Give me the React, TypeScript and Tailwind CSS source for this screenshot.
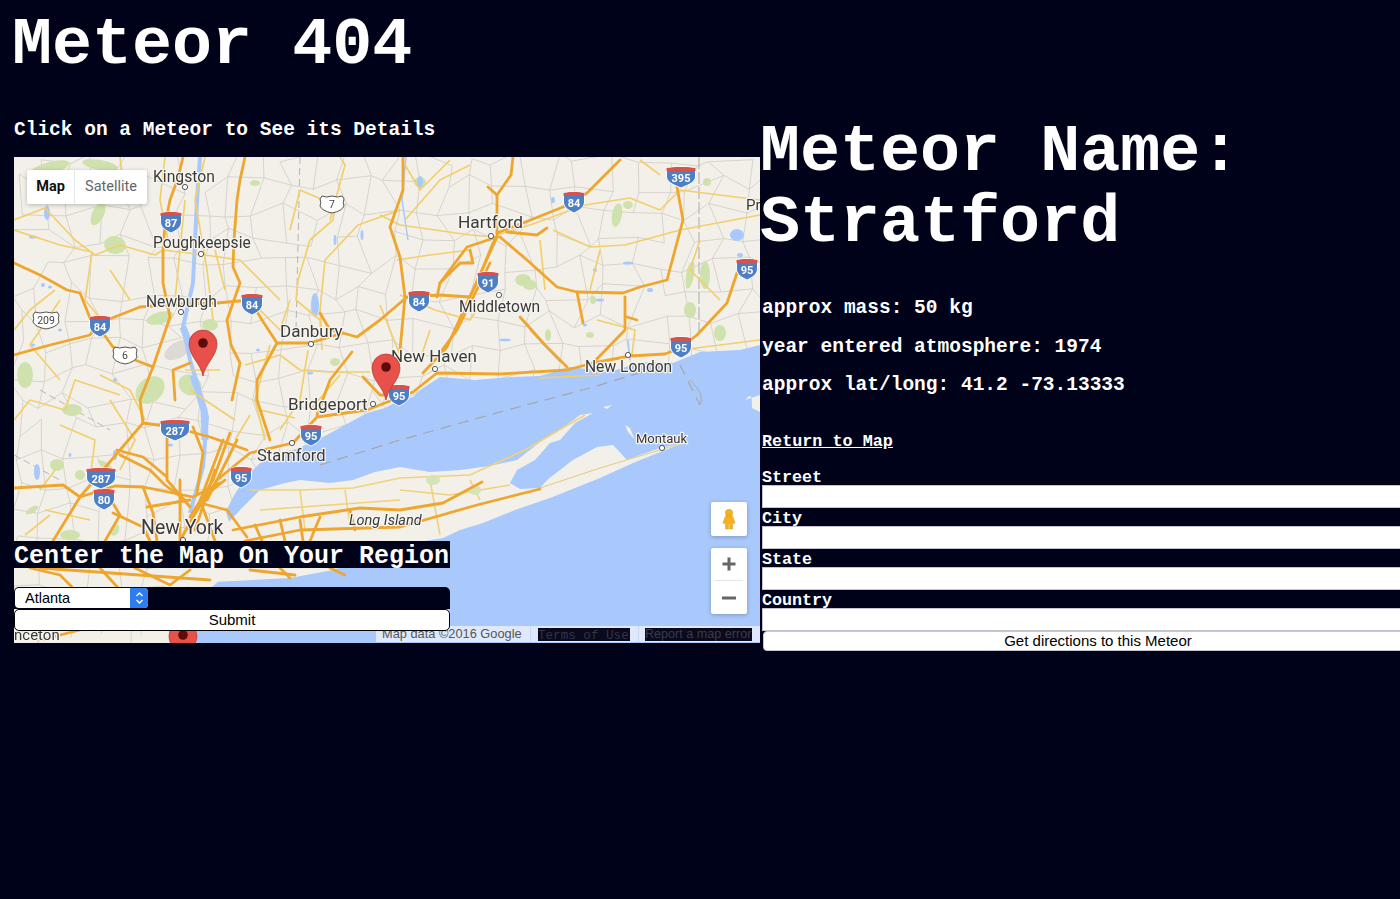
import React from "react";

const mono = "font-['Liberation_Mono','Courier_New',monospace]";
const sans = "font-['Liberation_Sans',Arial,sans-serif]";

const orange = [
  "M183 157L178 178L170 200L165 225L163 250L163 283L170 317L153 367L140 400L143 423",
  "M245 157L240 180L237 200L234 240L233 267L240 283L227 320L231 345L240 363L232 400",
  "M14 263L40 275L67 290L80 293L90 318L97 325L113 347L135 360L153 367",
  "M14 355L50 345L90 335L97 325L107 320L140 307L180 304L217 303L250 300L262 320L277 343L310 343L343 333L357 337L380 320L407 297L440 295L470 297L478 280L493 243L497 237",
  "M513 157L511 175L497 195L497 237",
  "M488 187L497 195",
  "M497 237L447 347L423 373",
  "M490 263L457 330L437 357",
  "M497 237L467 247L440 283L437 297",
  "M470 250L473 263L460 263L440 283",
  "M507 232L537 235L547 228",
  "M497 233L523 223L563 207L587 193L620 160",
  "M500 237L527 260L557 287L577 292L623 293L640 287L667 280L683 220L677 187L677 168",
  "M577 292L583 323",
  "M625 297L625 330L593 363",
  "M627 317L637 320",
  "M413 392L437 373L500 374L567 370L593 363L630 356L665 354L680 348L697 335L727 303L737 273",
  "M403 157L403 190L390 227L400 257L405 297L400 350",
  "M520 317L545 345L567 367",
  "M320 313L330 330L343 333",
  "M277 343L257 380L257 400L270 440",
  "M175 400L173 370L190 363",
  "M363 377L380 395L400 395",
  "M317 415L330 380L352 352",
  "M14 488L63 485L80 497L115 486L143 487L193 497L220 483",
  "M413 392L367 410L317 417L293 443L250 453L217 480L193 517L180 541",
  "M143 423L173 427L210 437L247 450",
  "M143 423L120 450L80 497L53 541",
  "M167 437L167 480L190 507",
  "M193 427L203 453L197 493",
  "M230 433L213 480L190 517",
  "M223 440L203 493L196 512",
  "M237 440L207 500",
  "M117 450L143 457L167 477",
  "M143 487L153 513L157 541",
  "M113 513L143 527L150 541",
  "M200 503L227 510L247 537",
  "M147 507L190 500",
  "M105 490L120 515L105 541",
  "M180 480L180 541",
  "M215 470L195 530",
  "M225 480L200 500L215 541",
  "M120 455L150 470L165 485L185 500",
  "M233 530L300 517L360 508L400 510L443 503L482 482",
  "M245 541L300 530L400 527L477 505L540 489",
  "M300 520L303 541M320 517L310 541M350 510L355 530M280 520L285 541M255 525L262 541",
  "M30 568L60 575L72 587M100 568L120 590M135 568L170 585L190 570M250 570L295 575M40 640L80 630",
  "M40 568L210 580M280 568L290 578M330 568L345 575",
];

const yellow = [
  "M14 220L45 208L75 240L95 255L120 245L155 255L163 250L205 255L240 260L280 300",
  "M14 230L60 245L92 252L85 300L110 330",
  "M165 157L160 200L168 240M205 157L195 200L207 270L213 320",
  "M120 157L122 175M290 230L300 190L335 205L333 220L310 240L298 280L296 300L320 320L322 350",
  "M14 330L30 310L55 290",
  "M340 157L345 165L330 220",
  "M400 210L358 225L325 260L320 310L322 335",
  "M380 215L400 225L470 235L497 237",
  "M497 235L530 225L585 205L630 198L660 210L680 190L760 200",
  "M553 230L590 247L625 245L680 230L760 215",
  "M397 260L430 255L470 250",
  "M400 295L435 310L470 320L480 305",
  "M470 165L440 180L405 220",
  "M380 305L400 355",
  "M540 378L600 375M597 320L635 330L632 355",
  "M680 350L760 340",
  "M100 375L130 390L145 420M14 420L30 400L65 410L75 380L120 395",
  "M245 365L280 355L300 370L330 372L370 372",
  "M270 345L255 400L265 440M308 350L300 400L280 430",
  "M40 490L55 470M190 390L235 420M220 370L185 370",
  "M340 375L310 410M260 410L295 418",
  "M185 200L180 250L175 300M215 250L225 290M250 300L280 330L290 300M130 300L110 270M60 300L30 345L60 380",
  "M450 160L420 190L405 165M640 160L660 175M540 240L545 290M600 250L590 290M700 240L690 270L720 300M430 330L420 360",
  "M110 400L135 440L120 470M60 425L95 440L90 480M250 415L235 440M45 510L90 520M25 535L50 515",
];

const greens: [number, number, number, number, number][] = [
  [50, 168, 20, 6, -15], [100, 165, 18, 5, 10], [98, 214, 6, 12, 25], [115, 245, 11, 9, 10], [255, 183, 5, 3, 0], [160, 318, 14, 6, -15],
  [210, 325, 8, 6, 0], [150, 390, 16, 12, -40], [190, 385, 12, 10, 30], [25, 375, 8, 13, 0], [72, 410, 10, 6, 0], [335, 362, 5, 4, 0],
  [420, 182, 6, 5, 0], [530, 285, 7, 5, 0], [617, 215, 5, 12, 10], [628, 205, 5, 4, 0], [523, 280, 8, 6, 0], [590, 335, 4, 3, 0],
  [548, 335, 3, 6, 0], [593, 300, 3, 4, 0], [690, 275, 4, 14, 10], [705, 275, 5, 14, 0], [690, 310, 6, 8, 0], [720, 333, 6, 8, 0], [707, 182, 4, 4, 0],
  [57, 465, 7, 6, 0], [80, 475, 5, 5, 0], [32, 510, 7, 3, -30], [105, 465, 8, 3, 30], [115, 530, 4, 6, 25], [70, 535, 10, 5, 0],
];

const ponds: [number, number, number, number][] = [
  [47, 213, 3, 7], [33, 237, 4, 1.5], [43, 285, 2, 2], [50, 287, 2, 1.5], [33, 345, 2, 1.5], [60, 330, 2, 1.5], [255, 305, 1.5, 8], [315, 305, 4, 12], [335, 240, 1.5, 5],
  [362, 235, 1.5, 5], [420, 182, 3, 6], [553, 200, 2, 3], [595, 270, 2, 2], [585, 325, 2, 1.5], [600, 300, 4, 1.5], [650, 290, 3, 2], [628, 263, 5, 1.5], [737, 235, 7, 6],
  [740, 255, 3, 2], [505, 340, 6, 1.5], [115, 455, 2, 5], [70, 455, 1.5, 2], [37, 472, 3, 8], [170, 445, 3, 1.5], [258, 350, 2, 1.5], [115, 380, 2, 2], [310, 373, 3, 1.5],
];

function rand(i: number) {
  const s = Math.sin(i * 12.9898) * 43758.5453;
  return s - Math.floor(s);
}

function mesh() {
  const step = 27;
  const pt = (c: number, r: number) => {
    const id = c * 101 + r * 17 + 3;
    return [14 + c * step + (rand(id) - 0.5) * 20, 157 + r * step + (rand(id + 7) - 0.5) * 20];
  };
  const out: string[] = [];
  for (let c = 0; c < 29; c++) {
    for (let r = 0; r < 18; r++) {
      const [x, y] = pt(c, r);
      const [x2, y2] = pt(c + 1, r);
      const [x3, y3] = pt(c, r + 1);
      if (rand(c * 7 + r * 31) > 0.15) out.push(`M${x.toFixed(1)} ${y.toFixed(1)}L${x2.toFixed(1)} ${y2.toFixed(1)}`);
      if (rand(c * 13 + r * 41) > 0.15) out.push(`M${x.toFixed(1)} ${y.toFixed(1)}L${x3.toFixed(1)} ${y3.toFixed(1)}`);
    }
  }
  return out.join("");
}

function Interstate({ x, y, n, w = 21 }: { x: number; y: number; n: string; w?: number }) {
  const h = w / 2;
  return (
    <g transform={`translate(${x} ${y})`}>
      <path d={`M${-h} -9C${-h / 2} -10.5 ${h / 2} -10.5 ${h} -9L${h} 0C${h} 6 4 9 0 11C-4 9 ${-h} 6 ${-h} 0Z`} fill="#4d7fc4" stroke="#fff" strokeWidth="1" />
      <path d={`M${-h} -9C${-h / 2} -10.5 ${h / 2} -10.5 ${h} -9L${h} -6H${-h}Z`} fill="#d4534f" />
      <text x="0" y="4.5" textAnchor="middle" fontSize="11" fontWeight="700" fill="#fff" fontFamily="Roboto">{n}</text>
    </g>
  );
}

function USRoute({ x, y, n, w = 20 }: { x: number; y: number; n: string; w?: number }) {
  const h = w / 2;
  return (
    <g transform={`translate(${x} ${y})`}>
      <path d={`M${-h + 2} -8Q${-h / 2} -6 0 -8Q${h / 2} -6 ${h - 2} -8L${h} -5Q${h - 1.5} -1 ${h} 2Q${h - 2} 7 0 9Q${-h + 2} 7 ${-h} 2Q${-h + 1.5} -1 ${-h} -5Z`} fill="#fff" stroke="#555" strokeWidth="1" />
      <text x="0" y="4" textAnchor="middle" fontSize="10.5" fill="#444" fontFamily="Roboto">{n}</text>
    </g>
  );
}

function Pin({ x, y }: { x: number; y: number }) {
  return (
    <g transform={`translate(${x} ${y})`}>
      <path d="M0 0C-2 -12 -14 -20 -14 -32A14 14 0 0 1 14 -32C14 -20 2 -12 0 0Z" fill="#e8504a" stroke="#a93a35" strokeWidth=".7" />
      <circle cx="0" cy="-33" r="4.8" fill="#5e0c0a" />
    </g>
  );
}

function City({ x, y, t, cx, cy, size = 16, italic = false }: { x: number; y: number; t: string; cx?: number; cy?: number; size?: number; italic?: boolean }) {
  return (
    <g>
      <text x={x} y={y} fontSize={size} fontStyle={italic ? "italic" : "normal"} fontFamily="Roboto" fill="#3a3a3a" stroke="#f7f5f0" strokeWidth="2.5" paintOrder="stroke" strokeLinejoin="round">
        {t}
      </text>
      {cx !== undefined && <circle cx={cx} cy={cy} r="2.6" fill="#fff" stroke="#555" strokeWidth="1" />}
    </g>
  );
}

function MapDrawing() {
  return (
    <svg viewBox="14 157 746 486" className="absolute inset-0 h-full w-full blur-[0.35px]">
      <rect x="14" y="157" width="746" height="486" fill="#f3f0e9" />
      <path d={mesh()} stroke="#cfccc6" strokeWidth=".8" fill="none" />
      <path d="M14 455L60 480M40 390L110 430M300 157L296 330" stroke="#b5b5b5" strokeWidth="1" strokeDasharray="7 4" fill="none" />
      <path d="M699 157L699 335" stroke="#aaa" strokeWidth="1" strokeDasharray="12 3" fill="none" />
      {greens.map(([x, y, a, b, r], i) => (
        <ellipse key={i} cx={x} cy={y} rx={a} ry={b} transform={`rotate(${r} ${x} ${y})`} fill="#cfe2ae" />
      ))}
      <ellipse cx="178" cy="350" rx="15" ry="8" fill="#dcdad4" transform="rotate(-30 178 350)" />
      {ponds.map(([x, y, a, b], i) => (
        <ellipse key={i} cx={x} cy={y} rx={a} ry={b} fill="#a9c8fb" />
      ))}
      <path d="M200 157L197 200L193 283L183 327L190 360L197 383L207 417L203 467L190 513" stroke="#a9c8fb" strokeWidth="4" fill="none" />
      <path d="M183 327L190 345M193 375L204 410L205 440" stroke="#a9c8fb" strokeWidth="7" fill="none" />
      <path d="M406 157L402 200L408 240M530 330L560 362M628 340L630 360" stroke="#a9c8fb" strokeWidth="1.5" fill="none" />
      <path
        d="M760 345L740 350L700 352L673 363L640 362L610 372L570 367L540 376L513 377L475 380L440 377L420 390L413 397L400 400L385 408L367 413L345 425L325 436L310 443L290 452L260 463L245 478L233 497L226 512L235 540L220 580L197 600L197 643L760 643Z"
        fill="#a9c8fb"
      />
      <path
        d="M226 525L240 510L260 490L285 483L300 480L330 483L353 480L375 472L400 467L430 472L460 470L490 466L517 460L540 442L560 430L580 415L593 413L575 423L560 440L550 443L535 460L517 470L510 483L520 489L540 488L547 480L573 460L597 447L613 445L627 460L640 455L660 448L683 443L660 452L633 463L600 478L550 498L515 510L483 523L460 530L443 538L400 545L370 558L333 570L290 578L213 582L167 590L160 570L200 560Z"
        fill="#f3f0e9"
      />
      <path d="M700 405C705 395 695 385 690 380" stroke="#aaa" strokeWidth="1" fill="none" />
      <path d="M745 400C750 395 752 392 752 408L760 412L760 395Z" fill="#f3f0e9" />
      <path d="M625 425L628 432L635 440L630 428ZM612 405L607 409L603 407Z" fill="#f3f0e9" />
      <path d="M320 465L400 440L500 412L590 388L672 363M680 365L700 405" stroke="#a6a6a6" strokeWidth="1.2" strokeDasharray="11 7" fill="none" />
      <path d="M250 490L300 490L353 488L400 478L470 475L525 450L585 415M400 490L450 495L510 485M300 490L305 530M345 490L350 525M430 480L440 535M470 480L480 500M260 510L400 500" stroke="#efd27c" strokeWidth="1.6" fill="none" />
      <path d="M540 488L600 468L683 443" stroke="#e3cd8b" strokeWidth="1.2" fill="none" />
      <ellipse cx="433" cy="480" rx="7" ry="5" fill="#d4e3b8" /><ellipse cx="475" cy="490" rx="6" ry="5" fill="#d4e3b8" />
      {yellow.map((d, i) => (
        <path key={i} d={d} stroke="#f2cf6d" strokeWidth="1.7" fill="none" strokeLinejoin="round" />
      ))}
      {orange.map((d, i) => (
        <path key={i} d={d} stroke="#eea62f" strokeWidth="2.8" fill="none" strokeLinejoin="round" strokeLinecap="round" />
      ))}
      <City x={153} y={182} t="Kingston" cx={185} cy={187} size={15.7} />
      <City x={153} y={248} t="Poughkeepsie" cx={201} cy={254} size={15.6} />
      <City x={146} y={307} t="Newburgh" cx={181} cy={312} size={15.6} />
      <City x={280} y={337} t="Danbury" cx={311} cy={344} size={17} />
      <City x={458} y={228} t="Hartford" cx={491} cy={236} size={17.3} />
      <City x={459} y={312} t="Middletown" cx={499} cy={295} size={15.6} />
      <City x={391} y={362} t="New Haven" cx={435} cy={369} size={17} />
      <City x={585} y={372} t="New London" cx={628} cy={355} size={15.6} />
      <City x={288} y={410} t="Bridgeport" cx={373} cy={404} size={17} />
      <City x={257} y={461} t="Stamford" cx={292} cy={443} size={16.5} />
      <City x={636} y={443} t="Montauk" cx={662} cy={448} size={13} />
      <City x={141} y={534} t="New York" cx={183} cy={540} size={19.5} />
      <City x={349} y={525} t="Long Island" size={14.5} italic />
      <City x={746} y={210} t="Pr" size={15} />
      <City x={14} y={640} t="nceton" size={15} />
      {[
        [171, 222, "87"], [100, 326, "84"], [252, 304, "84"], [574, 202, "84"], [419, 301, "84"], [488, 282, "91"], [747, 269, "95"], [681, 347, "95"], [399, 395, "95"], [311, 435, "95"], [241, 477, "95"], [104, 499, "80"],
      ].map(([x, y, n]) => (
        <Interstate key={`${x}-${y}`} x={x as number} y={y as number} n={n as string} />
      ))}
      <Interstate x={681} y={177} n="395" w={29} />
      <Interstate x={175} y={430} n="287" w={29} />
      <Interstate x={101} y={478} n="287" w={29} />
      <USRoute x={332} y={204} n="7" w={24} />
      <USRoute x={125} y={355} n="6" w={24} />
      <USRoute x={46} y={320} n="209" w={26} />
      <Pin x={203} y={376} />
      <Pin x={386} y={400} />
      <Pin x={183} y={668} />
    </svg>
  );
}

function Field({ label }: { label: string }) {
  return (
    <div className="flex w-[700px] flex-col">
      <label className={`${mono} h-[18px] text-[16.7px] font-bold leading-[21px] text-white`}>{label}</label>
      <input type="text" className="h-[23px] w-full border border-[#c5c5d0] bg-white" />
    </div>
  );
}

export default function App() {
  return (
    <div className={`${mono} flex h-[899px] w-[1400px] overflow-hidden bg-[#00021a] text-white`}>
      <div className="w-[760px] shrink-0 pl-[14px]">
        <h1 className="-ml-[2px] mt-[10px] h-[70px] text-[66.7px] font-bold leading-[70px] whitespace-nowrap">Meteor 404</h1>
        <p className="mt-[39px] h-[38px] text-[19.5px] font-bold leading-[22px]">Click on a Meteor to See its Details</p>
        <div className="relative h-[486px] w-[746px] overflow-hidden">
          <MapDrawing />
          <div className={`absolute left-[13px] top-[13px] flex h-[34px] w-[120px] rounded-[2px] bg-white font-['Roboto',sans-serif] text-[14.5px] shadow-[0_1px_4px_rgba(0,0,0,0.25)]`}>
            <div className="flex w-[48px] items-center justify-center border-r border-[#e6e6e6] font-bold text-[#111]">Map</div>
            <div className="flex flex-1 items-center justify-center text-[#666]">Satellite</div>
          </div>
          <div className="absolute left-[697px] top-[345px] flex h-[34px] w-[36px] items-center justify-center rounded-[2px] bg-white shadow-[0_1px_4px_rgba(0,0,0,0.25)]">
            <svg width="14" height="24" viewBox="0 0 16 24">
              <circle cx="8" cy="5" r="4.2" fill="#f5b21e" stroke="#d99a12" strokeWidth=".5" />
              <path d="M4 8.5H12L15 16.5L13 17.5L12 14V23.5H8.6V17.5H7.4V23.5H4V14L3 17.5L1 16.5Z" fill="#f5b21e" stroke="#d99a12" strokeWidth=".5" />
            </svg>
          </div>
          <div className="absolute left-[697px] top-[391px] flex h-[66px] w-[36px] flex-col items-center rounded-[2px] bg-white shadow-[0_1px_4px_rgba(0,0,0,0.25)]">
            <svg width="14" height="14" viewBox="0 0 14 14" className="mt-[9px]"><path d="M5.5 0.5H8.5V5.5H13.5V8.5H8.5V13.5H5.5V8.5H0.5V5.5H5.5Z" fill="#666" /></svg>
            <div className="mt-[9px] h-px w-[28px] bg-[#e6e6e6]" />
            <svg width="14" height="4" viewBox="0 0 14 4" className="mt-[15px]"><rect y=".5" width="14" height="3" fill="#666" /></svg>
          </div>
          <div className={`${sans} absolute left-[362px] top-[469px] flex h-[16px] w-[384px] items-center bg-[#dfe9fb] text-[12.8px] leading-[16px] text-[#555]`}>
            <span className="ml-[6px] w-[148px]">Map data ©2016 Google</span>
            <span className="h-full w-px bg-[#c9d8f5]" />
            <span className={`${mono} ml-[7px] h-[13px] w-[92px] bg-[#0a0a1c] text-[12.6px] leading-[16px] text-[#33334a]`}>Terms of Use</span>
            <span className="ml-[8px] h-full w-px bg-[#c9d8f5]" />
            <span className="ml-[6px] h-[13px] w-[107px] whitespace-nowrap bg-[#0a0a1c] text-[12.6px] leading-[13px] text-[#3a3a4c]">Report a map error</span>
          </div>
          <div className="absolute left-0 top-[384px] w-[436px]">
            <h2 className="h-[27px] whitespace-nowrap bg-[#00021a] text-[25px] font-bold leading-[31px]">Center the Map On Your Region</h2>
            <form className={`${sans} mt-[19px] flex flex-col`}>
              <div className="flex h-[22px] items-center rounded-t-[5px] bg-[#00021a] pl-[1px]">
                <div className="relative h-[20px] w-[133px]">
                  <select className="block h-[20px] w-full appearance-none rounded-[4px] bg-white pl-[10px] text-[14.5px] leading-[18px] text-black">
                    <option>Atlanta</option>
                  </select>
                  <span className="absolute right-0 top-0 flex h-[20px] w-[18px] items-center justify-center rounded-r-[4px] bg-[#2d7cf0]">
                    <svg width="9" height="14" viewBox="0 0 9 14" fill="none" stroke="#fff" strokeWidth="1.4"><path d="M1.5 5L4.5 2L7.5 5M1.5 9L4.5 12L7.5 9" /></svg>
                  </span>
                </div>
              </div>
              <button type="button" className="h-[22px] w-full rounded-[5px] border border-black bg-white text-[15px] leading-[20px] text-black">Submit</button>
            </form>
          </div>
        </div>
      </div>
      <div className={`w-[640px] shrink-0`}>
        <h1 className="mt-[117px] w-[600px] text-[66.7px] font-bold leading-[71px]">Meteor Name: Stratford</h1>
        <div className="mt-[38px] flex flex-col gap-[16px] pl-[2px] text-[19.5px] font-bold leading-[22.5px]">
          <p>approx mass: 50 kg</p>
          <p>year entered atmosphere: 1974</p>
          <p className="whitespace-nowrap">approx lat/long: 41.2 -73.13333</p>
        </div>
        <a href="#" className="ml-[2px] mt-[35px] block h-[19px] w-fit text-[16.8px] font-bold leading-[19px] underline">Return to Map</a>
        <form className="ml-[2px] mt-[16px] flex w-[700px] flex-col">
          <Field label="Street" />
          <Field label="City" />
          <Field label="State" />
          <Field label="Country" />
          <button type="button" className={`${sans} ml-px h-[20px] w-[670px] rounded-[4px] border border-[#c5c5d0] bg-white text-[15px] leading-[18px] text-black`}>Get directions to this Meteor</button>
        </form>
      </div>
    </div>
  );
}
